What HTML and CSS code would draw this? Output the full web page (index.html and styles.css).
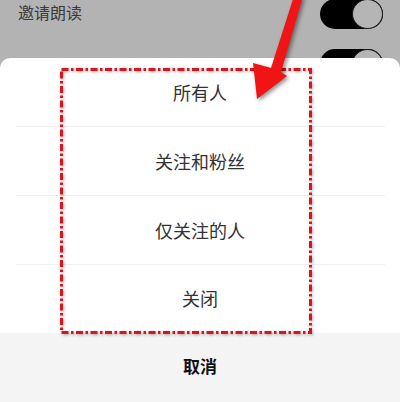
FILE: index.html
```html
<!DOCTYPE html>
<html lang="zh-CN">
<head>
<meta charset="utf-8">
<title>邀请朗读</title>
<link rel="stylesheet" href="styles.css">
</head>
<body>
<div class="page">
  <div class="settings">
    <div class="settings-list">
      <div class="setting-row">
        <span class="setting-label">邀请朗读</span>
        <span class="toggle"><span class="knob"></span></span>
      </div>
      <div class="setting-row">
        <span class="setting-label"></span>
        <span class="toggle"><span class="knob"></span></span>
      </div>
    </div>
  </div>
  <div class="sheet">
    <div class="option"><span>所有人</span></div>
    <div class="option"><span>关注和粉丝</span></div>
    <div class="option"><span>仅关注的人</span></div>
    <div class="option last"><span>关闭</span></div>
    <div class="cancel">取消</div>
  </div>
  <svg class="annotation" width="400" height="402" viewBox="0 0 400 402">
    <rect class="box" x="61.5" y="69.5" width="249" height="263"/>
    <polygon class="arrow" points="257,99 253,63 271,68 294,-4 303,-4 281,72 287,76"/>
  </svg>
</div>
</body>
</html>
```
FILE: styles.css
```css
* { box-sizing: border-box; }
html, body { margin: 0; padding: 0; }
body {
  width: 400px;
  height: 402px;
  overflow: hidden;
  background: #b3b3b3;
  font-family: "Noto Sans CJK SC", "Noto Sans", sans-serif;
}
.page {
  position: relative;
  width: 400px;
  height: 402px;
}
.settings {
  height: 58px;
  overflow: hidden;
  background: #b3b3b3;
}
.settings-list {
  margin-top: -11px;
}
.setting-row {
  height: 50px;
  display: flex;
  align-items: center;
  justify-content: space-between;
  padding: 0 17px 0 18px;
}
.setting-label {
  font-size: 16px;
  color: #3a3a3a;
  margin-top: -4px;
}
.toggle {
  width: 63px;
  height: 30px;
  border-radius: 15px;
  background: #000;
  display: flex;
  justify-content: flex-end;
  align-items: center;
}
.knob {
  width: 31px;
  height: 30px;
  border-radius: 50%;
  background: #b5b5b5;
  border: 1.5px solid #1a1a1a;
}
.sheet {
  background: #fff;
  border-radius: 10px 10px 0 0;
  display: flex;
  flex-direction: column;
}
.option {
  height: 69px;
  display: flex;
  align-items: center;
  justify-content: center;
  padding-bottom: 2px;
  font-size: 18px;
  color: #333;
  position: relative;
}
.option::after {
  content: "";
  position: absolute;
  left: 16px;
  right: 15px;
  bottom: 0;
  height: 1px;
  background: #efefef;
}
.option.last { height: 68px; }
.option.last::after { display: none; }
.cancel {
  height: 69px;
  background: #f4f4f4;
  display: flex;
  align-items: center;
  justify-content: center;
  padding-bottom: 4px;
  font-size: 17px;
  font-weight: 700;
  color: #111;
}
.annotation {
  position: absolute;
  left: 0;
  top: 0;
}
.box {
  fill: none;
  stroke: #d8141c;
  stroke-width: 3;
  stroke-dasharray: 7 2.5 2.5 2.5;
  filter: drop-shadow(1px 1px 1.5px rgba(0,0,0,0.35));
}
.arrow {
  fill: #f01414;
  filter: drop-shadow(2px 2px 2px rgba(0,0,0,0.45));
}
```
